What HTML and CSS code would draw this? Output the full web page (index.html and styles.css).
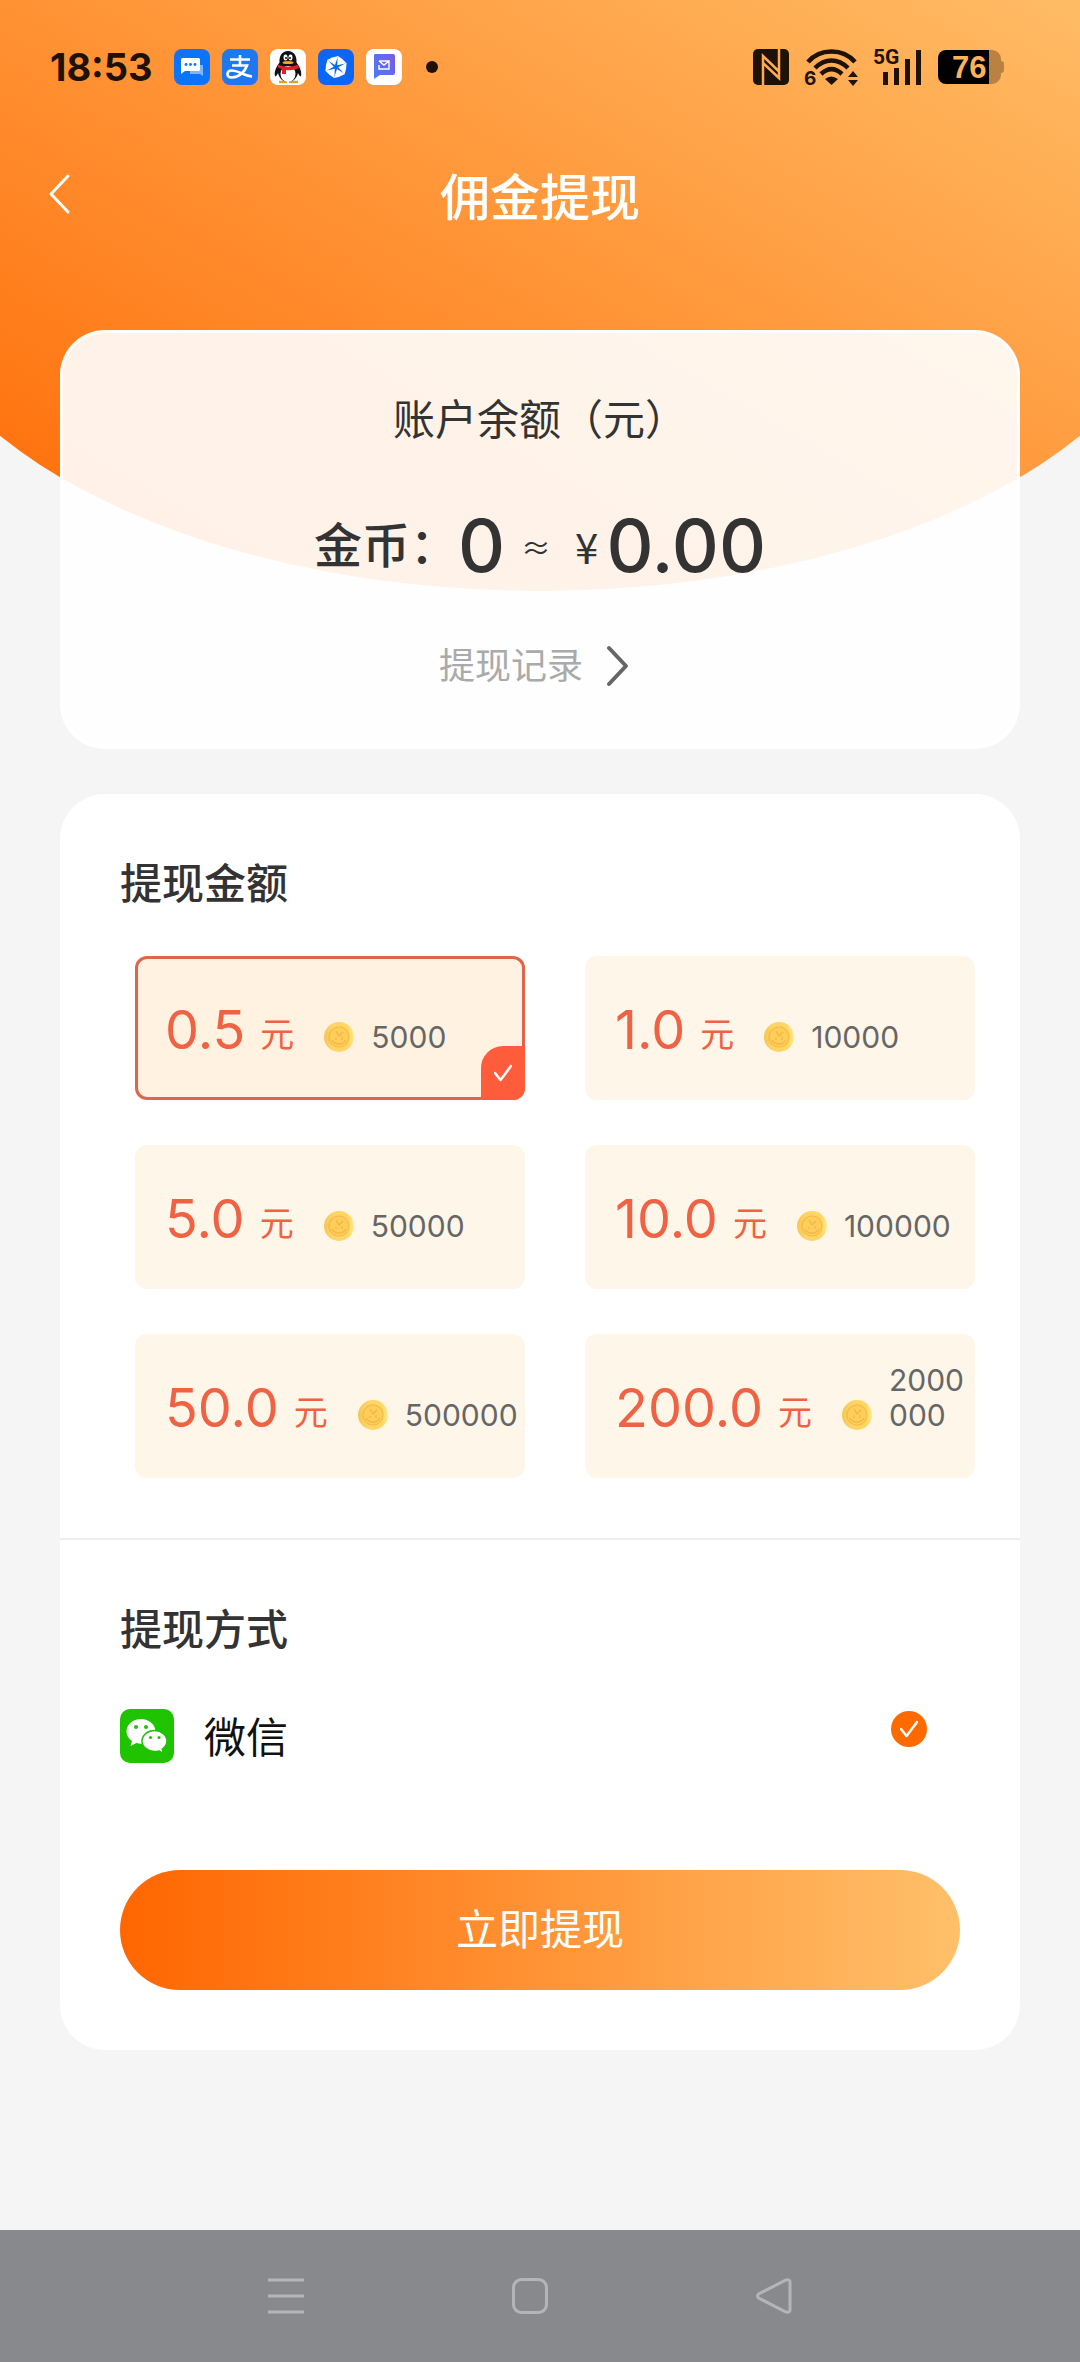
FILE: index.html
```html
<!DOCTYPE html>
<html lang="zh-CN">
<head>
<meta charset="utf-8">
<meta name="viewport" content="width=device-width, initial-scale=1">
<title>佣金提现</title>
<link rel="stylesheet" href="styles.css">
</head>
<body>
<svg class="defs" width="0" height="0" aria-hidden="true">
  <defs>
    <linearGradient id="gold" x1="0" x2="1" y1="0" y2="0"><stop offset="0" stop-color="#f6c650"/><stop offset=".3" stop-color="#ffd468"/><stop offset=".8" stop-color="#ffd662"/><stop offset="1" stop-color="#ffe98a"/></linearGradient>
    <linearGradient id="mail" x1="0" x2="1" y1="1" y2="0"><stop offset="0" stop-color="#4a7df5"/><stop offset="1" stop-color="#7a5ae6"/></linearGradient>
    <symbol id="coin" viewBox="0 0 30 30">
      <circle cx="15" cy="15" r="15" fill="url(#gold)"/>
      <circle cx="15" cy="15" r="10" fill="#ffce58" stroke="#f3bb49" stroke-width="1.200"/>
      <path d="M8 18a8 8 0 0 0 14 0M12 9l3 5 4-4M12 16v2M18 15v3" fill="none" stroke="#f0b548" stroke-width="1.200"/>
    </symbol>
    <symbol id="tick" viewBox="0 0 18 18">
      <path d="M1 9l5.500 7L17 2" fill="none" stroke="#fff" stroke-width="2.500" stroke-linecap="round" stroke-linejoin="round"/>
    </symbol>
  </defs>
</svg>
<div class="page">
  <div class="backdrop"></div>

  <div class="status">
    <div class="status-left">
      <span class="time">18:53</span>
      <div class="apps">
        <svg viewBox="0 0 36 36"><rect width="36" height="36" rx="8" fill="#0a74fb"/><path d="M16 16h13v11l-3-2H16z" fill="#7db5ff"/><path d="M8.500 9h16a1.500 1.500 0 0 1 1.500 1.500v10a1.500 1.500 0 0 1-1.500 1.500H11l-4 3V10.500A1.500 1.500 0 0 1 8.500 9z" fill="#fff"/><g fill="#0a74fb"><circle cx="12" cy="15.500" r="1.400"/><circle cx="16.500" cy="15.500" r="1.400"/><circle cx="21" cy="15.500" r="1.400"/></g></svg>
        <svg viewBox="0 0 36 36"><rect width="36" height="36" rx="8" fill="#1f78f2"/><path d="M8 10.500h20M18 6v11M10 16.500h15c-2 6-8 12-15 12-6 0-6-7 0-7 6 0 11 5 20 6" fill="none" stroke="#fff" stroke-width="2.600"/></svg>
        <svg viewBox="0 0 36 36"><rect width="36" height="36" rx="8" fill="#fff"/><path d="M9 33h8M19 33h9" stroke="#d9a82c" stroke-width="2.500"/><path d="M18 2c-6 0-9 5-8.500 11.500C6 18 4 23 5 27c1 1 2-1 3-3 1 5 5 9 10 9s9-4 10-9c1 2 2 4 3 3 1-4-1-9-4.500-13.500C27 7 24 2 18 2z" fill="#111"/><ellipse cx="18" cy="25" rx="7.500" ry="8" fill="#fff"/><ellipse cx="15.500" cy="8.500" rx="2" ry="3" fill="#fff"/><ellipse cx="20.500" cy="8.500" rx="2" ry="3" fill="#fff"/><circle cx="16" cy="9" r="1" fill="#111"/><circle cx="20" cy="9" r="1" fill="#111"/><ellipse cx="18" cy="13.500" rx="5.500" ry="1.600" fill="#f5a81c"/><path d="M8 15.500c6 3 14 3 20 0l1 3.500c-4 2-9 2.500-13 2v4h-4v-5l-4-1.500z" fill="#e2202c"/></svg>
        <svg viewBox="0 0 36 36"><rect width="36" height="36" rx="8" fill="#0b66f6"/><g fill="#fff"><path d="M17 16L9 11q5-3 11-4z"/><path d="M17 16L9 11q5-3 11-4z" transform="rotate(60 18 18)"/><path d="M17 16L9 11q5-3 11-4z" transform="rotate(120 18 18)"/><path d="M17 16L9 11q5-3 11-4z" transform="rotate(180 18 18)"/><path d="M17 16L9 11q5-3 11-4z" transform="rotate(240 18 18)"/><path d="M17 16L9 11q5-3 11-4z" transform="rotate(300 18 18)"/></g></svg>
        <svg viewBox="0 0 36 36"><rect width="36" height="36" rx="8" fill="#fff"/><path d="M9 5h18a2 2 0 0 1 2 2v17a2 2 0 0 1-2 2H14l-6 4V6z" fill="url(#mail)"/><path d="M13 12h10v8H13v-4M13 12l5 4 5-4" fill="none" stroke="#fff" stroke-width="1.400"/></svg>
      </div>
      <span class="more"></span>
    </div>
    <div class="status-right">
      <svg class="nfc" viewBox="0 0 36 36"><rect width="36" height="36" rx="5" fill="#1e1204"/><path d="M10 36V7l16 15.500M26 0v29L10 14" fill="none" stroke="#ffab55" stroke-width="2.500"/></svg>
      <svg class="wifi" viewBox="0 0 54 38"><g fill="none" stroke="#1e1204" stroke-width="4.500"><path d="M4 14C16 0 39 0 51 14"/><path d="M11 20c10-10 23-10 33 0"/><path d="M17 26c7-6.500 14-6.500 21 0"/></g><path d="M21 31q6-5 13 0l-6.500 6z" fill="#1e1204"/><path d="M44 29l5-6 5 6zM44 32l5 6 5-6z" fill="#1e1204"/><text x="0" y="37" font-size="19" font-weight="700" fill="#1e1204">6</text></svg>
      <svg class="signal" viewBox="0 0 50 38"><text class="band" x="0" y="16" font-size="21" font-weight="700" fill="#1e1204">5G</text><path d="M12.500 24v13M23.500 20v17M34.500 11v26M45.500 2v35" stroke="#1e1204" stroke-width="5"/></svg>
      <svg class="battery" viewBox="0 0 66 34"><path d="M50 0h4a9 9 0 0 1 9 9v2q3 0 3 3v6q0 3-3 3v2a9 9 0 0 1-9 9h-4z" fill="#b98142"/><path d="M8 0h43v34H8a8 8 0 0 1-8-8V8a8 8 0 0 1 8-8z" fill="#000"/><text class="charge" x="14" y="28" font-size="31" font-weight="700" fill="#ffb25c">76</text></svg>
    </div>
  </div>

  <header class="navbar">
    <button class="back" type="button" aria-label="返回"><svg viewBox="0 0 22 40"><path d="M20 2L3 20l17 18" fill="none" stroke="#fff" stroke-width="3" stroke-linecap="round" stroke-linejoin="round"/></svg></button>
    <h1>佣金提现</h1>
  </header>

  <main>
    <section class="card balance">
      <p class="balance-label">账户余额（元）</p>
      <p class="balance-row"><span class="gold-label">金币：</span><strong>0</strong><span class="approx">≈</span><span class="yen">¥</span><strong>0.00</strong></p>
      <a class="history" href="#history">提现记录<svg viewBox="0 0 36 42"><path d="M4 3l17 18L4 39" fill="none" stroke="#666" stroke-width="4" stroke-linecap="round" stroke-linejoin="round"/></svg></a>
    </section>

    <form class="card withdraw">
      <section class="amounts">
        <h2>提现金额</h2>
        <div class="options">
          <label class="option"><input type="radio" name="amount" checked><span class="mark"><svg><use href="#tick"/></svg></span><span class="value">0.5</span><span class="unit">元</span><svg class="coin"><use href="#coin"/></svg><span class="count">5000</span></label>
          <label class="option"><input type="radio" name="amount"><span class="mark"><svg><use href="#tick"/></svg></span><span class="value">1.0</span><span class="unit">元</span><svg class="coin"><use href="#coin"/></svg><span class="count">10000</span></label>
          <label class="option"><input type="radio" name="amount"><span class="mark"><svg><use href="#tick"/></svg></span><span class="value">5.0</span><span class="unit">元</span><svg class="coin"><use href="#coin"/></svg><span class="count">50000</span></label>
          <label class="option"><input type="radio" name="amount"><span class="mark"><svg><use href="#tick"/></svg></span><span class="value">10.0</span><span class="unit">元</span><svg class="coin"><use href="#coin"/></svg><span class="count">100000</span></label>
          <label class="option"><input type="radio" name="amount"><span class="mark"><svg><use href="#tick"/></svg></span><span class="value">50.0</span><span class="unit">元</span><svg class="coin"><use href="#coin"/></svg><span class="count">500000</span></label>
          <label class="option"><input type="radio" name="amount"><span class="mark"><svg><use href="#tick"/></svg></span><span class="value">200.0</span><span class="unit">元</span><svg class="coin"><use href="#coin"/></svg><span class="count">2000000</span></label>
        </div>
      </section>
      <section class="method">
        <h2>提现方式</h2>
        <label class="pay">
          <svg class="wechat" viewBox="0 0 54 54"><rect width="54" height="54" rx="10" fill="#20c300"/><path d="M21 10C13 10 6.500 15.500 6.500 22.500c0 4 2 7 5.500 9.500l-1.500 5 6-3c1.500.5 3 .7 4.500.7 8 0 14.500-5.500 14.500-12.200S29 10 21 10z" fill="#fff"/><path d="M34.500 21.500c-7 0-12.500 4.700-12.500 10.500s5.500 10.500 12.500 10.500c1.500 0 3-.2 4.200-.6l4.800 2.600-1.200-4.500c2.800-2 4.700-4.800 4.700-8 0-5.800-5.500-10.500-12.500-10.500z" fill="#fff" stroke="#20c300" stroke-width="1.500"/><g fill="#20c300"><circle cx="16" cy="18" r="2"/><circle cx="26" cy="18" r="2"/><circle cx="30.500" cy="28.500" r="1.600"/><circle cx="39" cy="28.500" r="1.600"/></g></svg>
          <span class="pay-name">微信</span>
          <input type="radio" name="method" checked>
          <span class="pay-mark"><svg><use href="#tick"/></svg></span>
        </label>
        <button class="submit" type="button">立即提现</button>
      </section>
    </form>
  </main>

  <nav class="system">
    <button type="button" aria-label="任务"><svg viewBox="0 0 36 36"><path d="M0 2h36M0 18h36M0 34h36"/></svg></button>
    <button type="button" aria-label="主页"><svg viewBox="0 0 36 36"><rect x="1.500" y="1.500" width="33" height="33" rx="8"/></svg></button>
    <button type="button" aria-label="返回"><svg viewBox="0 0 36 36"><path d="M2.500 16L30 2q4-1 4 2v28q0 3-4 2L2.500 20q-2-2 0-4z"/></svg></button>
  </nav>
</div>
</body>
</html>
```
FILE: styles.css
```css
* {
  box-sizing: border-box;
}

body,
h1,
h2,
p {
  margin: 0;
}

body {
  background: #f5f5f5;
  color: #333;
  font-family: Inter, "Noto Sans CJK SC", sans-serif;
  font-size: 42px;
  line-height: 60px;
}

button {
  padding: 0;
  border: 0;
  background: none;
  font: inherit;
}

svg {
  display: block;
  overflow: visible;
}

.defs {
  position: absolute;
}

.page {
  position: relative;
  display: flex;
  flex-direction: column;
  min-height: 100vh;
  overflow: hidden;
}

/* curved orange area behind the header and the balance card */
.backdrop {
  position: absolute;
  z-index: -1;
  top: 0;
  left: -10%;
  width: 120%;
  height: 591px;
  border-radius: 0 0 50% 50% / 0 0 347px 347px;
  background: linear-gradient(30deg, #ff6600, #ffc06a);
}

.status {
  display: flex;
  justify-content: space-between;
  align-items: center;
  height: 134px;
  padding: 0 76px 0 50px;
}

.status-left,
.status-right,
.apps {
  display: flex;
  align-items: center;
}

.time {
  color: #1e1204;
  font-size: 38px;
  font-weight: 700;
}

.apps {
  gap: 12px;
  margin-left: 21px;
}

.apps svg,
.nfc {
  width: 36px;
  height: 36px;
}

.more {
  width: 12px;
  height: 12px;
  margin-left: 24px;
  border-radius: 50%;
  background: #1e1204;
}

.status-right {
  gap: 15px;
}

.wifi {
  width: 54px;
  height: 38px;
}

.signal {
  width: 50px;
  height: 38px;
}

.band {
  font-family: Roboto, sans-serif;
}

.charge {
  font-family: "Liberation Sans", sans-serif;
}

.battery {
  width: 66px;
  height: 34px;
}

.navbar {
  display: grid;
  grid-template-columns: 1fr auto 1fr;
  align-items: center;
  height: 120px;
  padding: 0 48px;
}

.back {
  justify-self: start;
}

.back svg {
  width: 22px;
  height: 40px;
}

h1 {
  padding-top: 8px;
  color: #fff;
  font-size: 50px;
  font-weight: 500;
}

main {
  display: flex;
  flex: 1;
  flex-direction: column;
  gap: 45px;
  padding: 76px 60px 180px;
}

.card {
  border-radius: 45px;
}

.balance {
  display: flex;
  flex-direction: column;
  align-items: center;
  padding: 57px 0 50px;
  border: 3px solid rgba(255, 255, 255, 0.8);
  background: rgba(255, 255, 255, 0.9);
}

.balance-row {
  display: flex;
  align-items: center;
  margin: 51px 0 45px;
  line-height: 90px;
}

.balance-row strong {
  font-size: 73px;
  font-weight: 500;
}

.gold-label {
  font-size: 48px;
  font-weight: 500;
}

.approx {
  margin: 0 24px 0 16px;
  font-size: 30px;
}

.approx,
.yen {
  font-family: "Noto Sans CJK SC", sans-serif;
}

.yen {
  margin-right: 8px;
}

.history {
  display: flex;
  align-items: center;
  gap: 22px;
  color: #aaa;
  font-size: 36px;
  text-decoration: none;
}

.history svg {
  width: 36px;
  height: 42px;
}

.withdraw {
  background: #fff;
}

.amounts {
  padding: 60px 45px 60px 60px;
  border-bottom: 2px solid #eee;
}

h2 {
  font-size: 42px;
  font-weight: 500;
}

.options {
  display: grid;
  grid-template-columns: 1fr 1fr;
  gap: 45px 60px;
  margin: 42px 0 0 15px;
}

.option {
  position: relative;
  display: flex;
  align-items: flex-end;
  height: 144px;
  padding: 0 0 42px 30px;
  border-radius: 12px;
  background: #fef6e8;
  color: #f06244;
}

.option:has(input:checked) {
  background: #fff2e1;
  box-shadow: inset 0 0 0 3px #dd664d;
}

.option input,
.pay input {
  position: absolute;
  opacity: 0;
}

.mark {
  position: absolute;
  right: 0;
  bottom: 0;
  display: none;
  place-items: center;
  width: 44px;
  height: 54px;
  border-radius: 22px 0 12px 0;
  background: #ff5c3c;
}

.option input:checked + .mark {
  display: grid;
}

.mark svg,
.pay-mark svg {
  width: 18px;
  height: 18px;
}

.value {
  font-size: 54px;
  line-height: 56px;
}

.unit {
  margin-left: 15px;
  font-size: 34px;
  line-height: 46px;
}

.coin {
  flex: none;
  width: 30px;
  height: 30px;
  margin: 0 17px 6px 30px;
}

.count {
  min-width: 0;
  margin-bottom: 3px;
  color: #666;
  font-size: 30px;
  line-height: 35px;
  word-break: break-all;
}

.method {
  padding: 60px;
}

.pay {
  display: flex;
  align-items: center;
  margin: 48px 0 102px;
}

.wechat {
  width: 54px;
  height: 54px;
  margin-bottom: 4px;
}

.pay-name {
  flex: 1;
  margin-left: 30px;
  color: #111;
}

.pay-mark {
  display: grid;
  place-items: center;
  width: 36px;
  height: 36px;
  margin: 0 33px 18px 0;
  border-radius: 50%;
  background: #ff6a00;
}

.submit {
  width: 100%;
  height: 120px;
  border-radius: 60px;
  background: linear-gradient(90deg, #ff6600, #ffc06a);
  color: #fff;
}

.system {
  display: flex;
  justify-content: center;
  align-items: center;
  gap: 208px;
  height: 132px;
  padding-right: 20px;
  background: #88898d;
}

.system svg {
  width: 36px;
  height: 36px;
  fill: none;
  stroke: #b4b5b9;
  stroke-width: 3px;
}
```
